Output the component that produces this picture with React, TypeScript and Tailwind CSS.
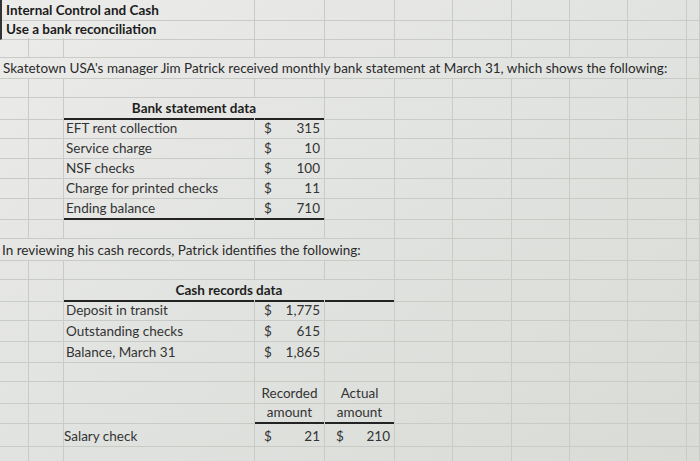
import React from 'react';

const SPAN: Record<number, string> = {
  1: 'col-span-1',
  2: 'col-span-2',
  3: 'col-span-3',
  5: 'col-span-5',
  10: 'col-span-10',
};

const COLS = 'grid grid-cols-[29px_35px_191px_70px_70px_58px_59px_58px_58px_59px_1fr]';

interface CellProps {
  span?: number;
  dark?: boolean;
  className?: string;
  children?: React.ReactNode;
}

// a spreadsheet cell; dark = thick underline used under table headers
const Cell: React.FC<CellProps> = ({ span = 1, dark = false, className = '', children }) => (
  <div
    className={`${SPAN[span]} flex items-center whitespace-nowrap border-r border-r-[#c9cbc7] ${
      dark ? 'border-b-2 border-b-[#232323]' : 'border-b border-b-[#c9cbc7]'
    } ${className}`}
  >
    {children}
  </div>
);

const Blank: React.FC<{ n: number }> = ({ n }) => (
  <>
    {Array.from({ length: n }).map((_, i) => (
      <Cell key={i} />
    ))}
  </>
);

const Row: React.FC<{ h?: string; children: React.ReactNode }> = ({ h = 'h-[20px]', children }) => (
  <div className={`${COLS} ${h}`}>{children}</div>
);

const Amount: React.FC<{ value: string; dark?: boolean; pl?: string; className?: string }> = ({
  value,
  dark,
  pl = 'pl-[9px]',
  className = '',
}) => (
  <Cell dark={dark} className={`justify-between ${pl} pr-[4px] ${className}`}>
    <span>$</span>
    <span>{value}</span>
  </Cell>
);

const bankRows = [
  ['EFT rent collection', '315'],
  ['Service charge', '10'],
  ['NSF checks', '100'],
  ['Charge for printed checks', '11'],
  ['Ending balance', '710'],
];

const cashRows = [
  ['Deposit in transit', '1,775', 'h-[21px]'],
  ['Outstanding checks', '615', 'h-[21px]'],
  ['Balance, March 31', '1,865', 'h-[20px]'],
];

export default function App() {
  return (
    <div className="w-[700px] h-[461px] overflow-hidden bg-gradient-to-br from-[#ececea] via-[#e1e3e0] to-[#d8dbd6] text-[13.5px] text-[#333] font-['Lato','Liberation_Sans',sans-serif]">
      <Row h="h-[19px]">
        <Cell span={3} className="pl-[4px] font-bold text-[#1c1c1c] border-l-2 border-l-[#333]">
          Internal Control and Cash
        </Cell>
        <Blank n={8} />
      </Row>
      <Row h="h-[19px]">
        <Cell span={3} className="pl-[4px] font-bold text-[#1c1c1c] border-l-2 border-l-[#333]">
          Use a bank reconciliation
        </Cell>
        <Blank n={8} />
      </Row>
      <Row>
        <Blank n={11} />
      </Row>
      <Row>
        <Cell span={10} className="pl-[3px] text-[#2a2a2a]">
          Skatetown USA's manager Jim Patrick received monthly bank statement at March 31, which shows the following:
        </Cell>
        <Blank n={1} />
      </Row>
      <Row>
        <Blank n={11} />
      </Row>

      {/* Bank statement table */}
      <Row>
        <Blank n={2} />
        <Cell span={2} dark className="justify-center font-bold text-[#1e1e1e]">
          Bank statement data
        </Cell>
        <Blank n={7} />
      </Row>
      {bankRows.map(([label, value], i) => {
        const last = i === bankRows.length - 1;
        return (
          <Row key={label} h={last ? 'h-[21px]' : 'h-[20px]'}>
            <Blank n={2} />
            <Cell dark={last} className="pl-[2px]">
              {label}
            </Cell>
            <Amount value={value} dark={last} />
            <Blank n={7} />
          </Row>
        );
      })}
      <Row>
        <Blank n={11} />
      </Row>
      <Row h="h-[21px]">
        <Cell span={5} className="pl-[2px] pt-[1px] text-[#2a2a2a]">
          In reviewing his cash records, Patrick identifies the following:
        </Cell>
        <Blank n={6} />
      </Row>
      <Row>
        <Blank n={11} />
      </Row>

      {/* Cash records table */}
      <Row>
        <Blank n={2} />
        <Cell span={3} dark className="justify-center font-bold text-[#1e1e1e]">
          Cash records data
        </Cell>
        <Blank n={6} />
      </Row>
      {cashRows.map(([label, value, h]) => (
        <Row key={label} h={h}>
          <Blank n={2} />
          <Cell className="pl-[2px]">{label}</Cell>
          <Amount value={value} />
          <Blank n={7} />
        </Row>
      ))}
      <Row>
        <Blank n={11} />
      </Row>
      <Row>
        <Blank n={3} />
        <Cell className="justify-center pt-[1px]">Recorded</Cell>
        <Cell className="justify-center pt-[1px]">Actual</Cell>
        <Blank n={6} />
      </Row>
      <Row>
        <Blank n={3} />
        <Cell dark className="justify-center">
          amount
        </Cell>
        <Cell dark className="justify-center">
          amount
        </Cell>
        <Blank n={6} />
      </Row>
      <Row h="h-[22px]">
        <Blank n={2} />
        <Cell className="pt-[4px]">Salary check</Cell>
        <Amount value="21" className="pt-[4px]" />
        <Amount value="210" pl="pl-[11px]" className="pt-[4px]" />
        <Blank n={6} />
      </Row>
      <Row h="h-[20px]">
        <Blank n={11} />
      </Row>
    </div>
  );
}
